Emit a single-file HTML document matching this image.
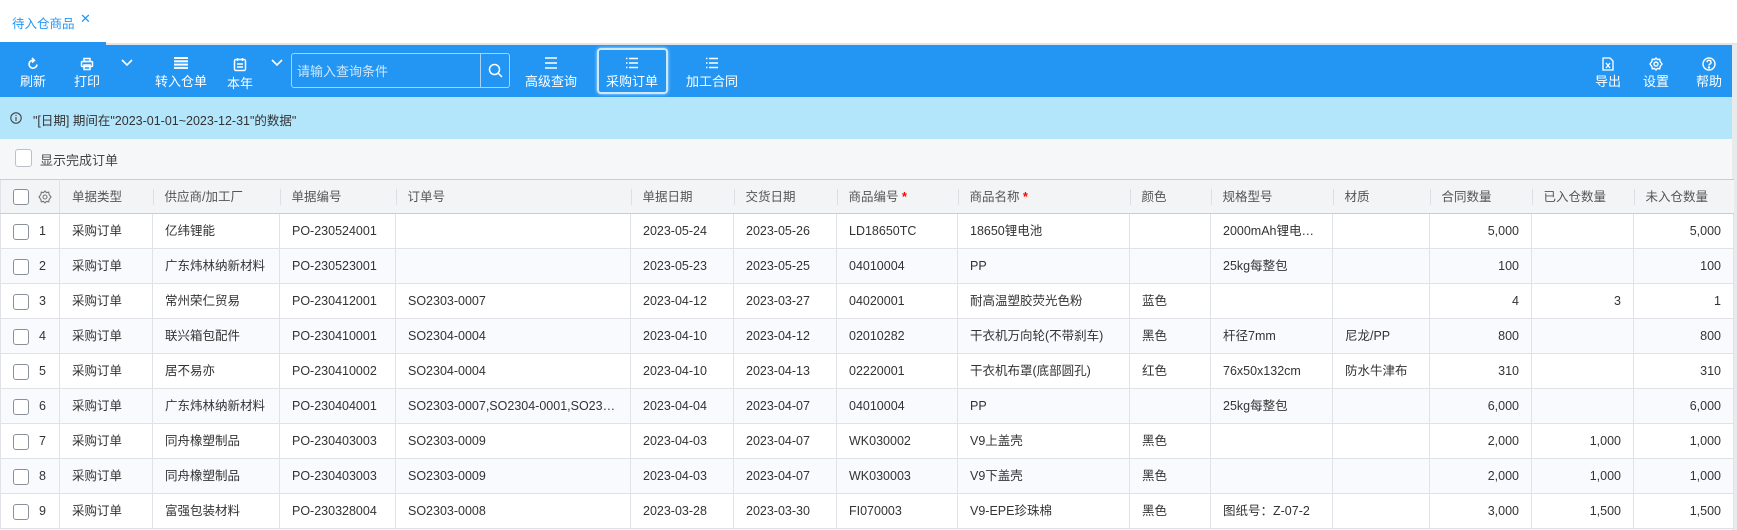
<!DOCTYPE html>
<html><head><meta charset="utf-8"><style>
*{margin:0;padding:0;box-sizing:border-box}
body{width:1737px;height:530px;overflow:hidden;background:#f5f7f9;font-family:"Liberation Sans","Noto Sans CJK SC",sans-serif;font-size:13px;color:#333;position:relative}
.abs{position:absolute}
.tabbar{left:0;top:0;width:1737px;height:45px;background:#fff;border-bottom:2px solid #e3e5e8}
.tb{left:0;top:45px;width:1732px;height:52px;background:#2396f3}
.btn{position:absolute;top:0;height:52px;color:#fff;text-align:center;font-size:13px}
.btn svg{position:absolute;left:50%;top:12px;transform:translateX(-50%)}
.btn span{position:absolute;top:26px;left:0;right:0;white-space:nowrap}
.info{left:0;top:97px;width:1732px;height:42px;background:#b3e5fb;color:#333}
table{position:absolute;left:0;top:179px;border-collapse:collapse;table-layout:fixed;width:1733px;font-size:12.5px}
td,th{height:35px;line-height:18px;vertical-align:middle;border:1px solid #dfe2e6;padding:0 8px 0 12px;white-space:nowrap;overflow:hidden;text-overflow:ellipsis;font-weight:normal;text-align:left}
td>span.t,th>span.t{display:inline-block;vertical-align:middle}
th{background:#f3f4f5;color:#555;border-left:none;border-right:none;height:34px;border-top:1px solid #c9ccd0;border-bottom:1px solid #c9ccd0;position:relative}
th.s:before{content:"";position:absolute;left:0;top:9px;height:16px;border-left:1px solid #dcdfe3}
tr td{background:#fff}
tr:nth-child(odd) td{background:#f8fafd}
td.r{text-align:right;padding:0 12px 0 8px}
.cb{display:inline-block;width:16px;height:16px;border:1px solid #8a9099;border-radius:3px;background:#fff;vertical-align:middle}
.star{color:#f00;font-weight:bold}
</style></head><body>
<div class="abs tabbar"></div>
<div class="abs" style="left:12px;top:13px;color:#2396f3;font-size:12.5px">待入仓商品</div>
<div class="abs" style="left:80px;top:11px;color:#2396f3;font-size:13px">✕</div>
<div class="abs" style="left:0;top:42px;width:106px;height:3px;background:#2396f3"></div>

<div class="abs tb">
 <div class="btn" style="left:13px;width:40px"><svg width="14" height="14" viewBox="0 0 14 14" fill="none" stroke="#fff" stroke-width="1.6"><path d="M11 7.5A4 4 0 1 1 8 3.3"/><path d="M6 1l2.4 2.3L6 5.5"/></svg><span>刷新</span></div>
 <div class="btn" style="left:67px;width:40px"><svg width="14" height="14" viewBox="0 0 14 14" fill="none" stroke="#fff" stroke-width="1.5"><rect x="4" y="1.5" width="6" height="3"/><rect x="1.5" y="4.5" width="11" height="5" rx="1"/><rect x="4" y="8" width="6" height="4.5"/></svg><span>打印</span></div>
 <div class="btn" style="left:117px;width:20px"><svg style="top:14px" width="12" height="8" viewBox="0 0 12 8" fill="none" stroke="#fff" stroke-width="1.6"><path d="M1 1l5 5 5-5"/></svg></div>
 <div class="btn" style="left:151px;width:60px"><svg width="14" height="12" viewBox="0 0 14 12" fill="#fff"><rect y="0" width="14" height="2"/><rect y="3.3" width="14" height="2"/><rect y="6.6" width="14" height="2"/><rect y="9.9" width="14" height="2"/></svg><span>转入仓单</span></div>
 <div class="btn" style="left:220px;width:40px"><svg width="14" height="15" viewBox="0 0 14 15" fill="none" stroke="#fff" stroke-width="1.5"><rect x="1.5" y="2.5" width="11" height="11" rx="1.5"/><path d="M4.5 1v3M9.5 1v3M4 7h6M4 10h6"/></svg><span style="top:28px">本年</span></div>
 <div class="btn" style="left:267px;width:20px"><svg style="top:14px" width="12" height="8" viewBox="0 0 12 8" fill="none" stroke="#fff" stroke-width="1.6"><path d="M1 1l5 5 5-5"/></svg></div>
 <div class="abs" style="left:291px;top:8px;width:219px;height:35px;border:1px solid #a9d3f7;border-radius:3px"></div>
 <div class="abs" style="left:297px;top:16px;color:#cfe6fb;font-size:13px">请输入查询条件</div>
 <div class="abs" style="left:480px;top:8px;width:1px;height:35px;background:#a9d3f7"></div>
 <svg class="abs" style="left:488px;top:18px" width="15" height="15" viewBox="0 0 15 15" fill="none" stroke="#fff" stroke-width="1.5"><circle cx="6.5" cy="6.5" r="5"/><path d="M10 10l4 4"/></svg>
 <div class="btn" style="left:521px;width:60px"><svg width="14" height="12" viewBox="0 0 14 12" fill="none" stroke="#fff" stroke-width="1.6"><path d="M1 1h12M1 6h12M1 11h12"/></svg><span>高级查询</span></div>
 <div class="abs" style="left:597px;top:3px;width:71px;height:46px;border:2px solid #cfe8fd;border-radius:4px;box-shadow:0 0 3px #bfe2ff"></div>
 <div class="btn" style="left:602px;width:60px"><svg width="14" height="12" viewBox="0 0 14 12" fill="none" stroke="#fff" stroke-width="1.4"><path d="M1 1.5h1.5M4 1.5h9M1 6h1.5M4 6h9M1 10.5h1.5M4 10.5h9"/></svg><span>采购订单</span></div>
 <div class="btn" style="left:682px;width:60px"><svg width="14" height="12" viewBox="0 0 14 12" fill="none" stroke="#fff" stroke-width="1.4"><path d="M1 1.5h1.5M4 1.5h9M1 6h1.5M4 6h9M1 10.5h1.5M4 10.5h9"/></svg><span>加工合同</span></div>
 <div class="btn" style="left:1588px;width:40px"><svg width="12" height="14" viewBox="0 0 12 14" fill="none" stroke="#fff" stroke-width="1.3"><path d="M1 1h7l3 3v9H1z"/><path d="M4 6l4 5M8 6l-4 5"/></svg><span>导出</span></div>
 <div class="btn" style="left:1636px;width:40px"><svg width="14" height="14" viewBox="0 0 14 14" fill="none" stroke="#fff" stroke-width="1.4"><circle cx="7" cy="7" r="2"/><path d="M7 1l1.5 1.6 2.2-.4.4 2.2L13 7l-1.9 2.6-.4 2.2-2.2-.4L7 13l-1.5-1.6-2.2.4-.4-2.2L1 7l1.9-2.6.4-2.2 2.2.4z"/></svg><span>设置</span></div>
 <div class="btn" style="left:1689px;width:40px"><svg width="14" height="14" viewBox="0 0 14 14" fill="none" stroke="#fff" stroke-width="1.4"><circle cx="7" cy="7" r="6"/><path d="M5 5.3a2 2 0 1 1 2.6 1.9c-.6.2-.6.7-.6 1.3"/><circle cx="7" cy="10.5" r=".5" fill="#fff"/></svg><span>帮助</span></div>
</div>

<div class="abs info"></div>
<svg class="abs" style="left:10px;top:112px" width="12" height="12" viewBox="0 0 12 12" fill="none" stroke="#444" stroke-width="1.1"><circle cx="6" cy="6" r="5.2"/><path d="M6 5v4M6 3v1"/></svg>
<div class="abs" style="left:33px;top:110px;font-size:12.5px">"[日期] 期间在"2023-01-01~2023-12-31"的数据"</div>
<div class="abs" style="left:15px;top:149px;width:17px;height:18px;border:1px solid #bcc1c8;border-radius:3px;background:#fff"></div>
<div class="abs" style="left:40px;top:150px;color:#444">显示完成订单</div>
<div class="abs" style="left:1732px;top:45px;width:5px;height:485px;background:#e9eaec"></div>

<table>
<colgroup><col style="width:59px"><col style="width:93px"><col style="width:127px"><col style="width:116px"><col style="width:235px"><col style="width:103px"><col style="width:103px"><col style="width:121px"><col style="width:172px"><col style="width:81px"><col style="width:122px"><col style="width:97px"><col style="width:102px"><col style="width:102px"><col style="width:100px"></colgroup>
<tr><th style="padding:0 0 0 12px;border-left:1px solid #dfe2e6;border-right:1px solid #dfe2e6"><span class="cb"></span><svg style="vertical-align:middle;margin-left:9px" width="14" height="14" viewBox="0 0 14 14" fill="none" stroke="#777" stroke-width="1.1"><circle cx="7" cy="7" r="2"/><path d="M7 1l1.5 1.6 2.2-.4.4 2.2L13 7l-1.9 2.6-.4 2.2-2.2-.4L7 13l-1.5-1.6-2.2.4-.4-2.2L1 7l1.9-2.6.4-2.2 2.2.4z"/></svg></th><th>单据类型</th><th class="s">供应商/加工厂</th><th class="s">单据编号</th><th class="s">订单号</th><th class="s">单据日期</th><th class="s">交货日期</th><th class="s">商品编号<span class="star"> *</span></th><th class="s">商品名称<span class="star"> *</span></th><th class="s">颜色</th><th class="s">规格型号</th><th class="s">材质</th><th class="s">合同数量</th><th class="s">已入仓数量</th><th class="s">未入仓数量</th></tr>
<tr><td style="padding:0 0 0 12px"><span class="cb"></span><span style="margin-left:10px">1</span></td><td>采购订单</td><td>亿纬锂能</td><td>PO-230524001</td><td></td><td>2023-05-24</td><td>2023-05-26</td><td>LD18650TC</td><td>18650锂电池</td><td></td><td>2000mAh锂电池...</td><td></td><td class="r">5,000</td><td class="r"></td><td class="r">5,000</td></tr>
<tr><td style="padding:0 0 0 12px"><span class="cb"></span><span style="margin-left:10px">2</span></td><td>采购订单</td><td>广东炜林纳新材料</td><td>PO-230523001</td><td></td><td>2023-05-23</td><td>2023-05-25</td><td>04010004</td><td>PP</td><td></td><td>25kg每整包</td><td></td><td class="r">100</td><td class="r"></td><td class="r">100</td></tr>
<tr><td style="padding:0 0 0 12px"><span class="cb"></span><span style="margin-left:10px">3</span></td><td>采购订单</td><td>常州荣仁贸易</td><td>PO-230412001</td><td>SO2303-0007</td><td>2023-04-12</td><td>2023-03-27</td><td>04020001</td><td>耐高温塑胶荧光色粉</td><td>蓝色</td><td></td><td></td><td class="r">4</td><td class="r">3</td><td class="r">1</td></tr>
<tr><td style="padding:0 0 0 12px"><span class="cb"></span><span style="margin-left:10px">4</span></td><td>采购订单</td><td>联兴箱包配件</td><td>PO-230410001</td><td>SO2304-0004</td><td>2023-04-10</td><td>2023-04-12</td><td>02010282</td><td>干衣机万向轮(不带刹车)</td><td>黑色</td><td>杆径7mm</td><td>尼龙/PP</td><td class="r">800</td><td class="r"></td><td class="r">800</td></tr>
<tr><td style="padding:0 0 0 12px"><span class="cb"></span><span style="margin-left:10px">5</span></td><td>采购订单</td><td>居不易亦</td><td>PO-230410002</td><td>SO2304-0004</td><td>2023-04-10</td><td>2023-04-13</td><td>02220001</td><td>干衣机布罩(底部圆孔)</td><td>红色</td><td>76x50x132cm</td><td>防水牛津布</td><td class="r">310</td><td class="r"></td><td class="r">310</td></tr>
<tr><td style="padding:0 0 0 12px"><span class="cb"></span><span style="margin-left:10px">6</span></td><td>采购订单</td><td>广东炜林纳新材料</td><td>PO-230404001</td><td>SO2303-0007,SO2304-0001,SO2303-0...</td><td>2023-04-04</td><td>2023-04-07</td><td>04010004</td><td>PP</td><td></td><td>25kg每整包</td><td></td><td class="r">6,000</td><td class="r"></td><td class="r">6,000</td></tr>
<tr><td style="padding:0 0 0 12px"><span class="cb"></span><span style="margin-left:10px">7</span></td><td>采购订单</td><td>同舟橡塑制品</td><td>PO-230403003</td><td>SO2303-0009</td><td>2023-04-03</td><td>2023-04-07</td><td>WK030002</td><td>V9上盖壳</td><td>黑色</td><td></td><td></td><td class="r">2,000</td><td class="r">1,000</td><td class="r">1,000</td></tr>
<tr><td style="padding:0 0 0 12px"><span class="cb"></span><span style="margin-left:10px">8</span></td><td>采购订单</td><td>同舟橡塑制品</td><td>PO-230403003</td><td>SO2303-0009</td><td>2023-04-03</td><td>2023-04-07</td><td>WK030003</td><td>V9下盖壳</td><td>黑色</td><td></td><td></td><td class="r">2,000</td><td class="r">1,000</td><td class="r">1,000</td></tr>
<tr><td style="padding:0 0 0 12px"><span class="cb"></span><span style="margin-left:10px">9</span></td><td>采购订单</td><td>富强包装材料</td><td>PO-230328004</td><td>SO2303-0008</td><td>2023-03-28</td><td>2023-03-30</td><td>FI070003</td><td>V9-EPE珍珠棉</td><td>黑色</td><td>图纸号：Z-07-2</td><td></td><td class="r">3,000</td><td class="r">1,500</td><td class="r">1,500</td></tr>
</table>
</body></html>
